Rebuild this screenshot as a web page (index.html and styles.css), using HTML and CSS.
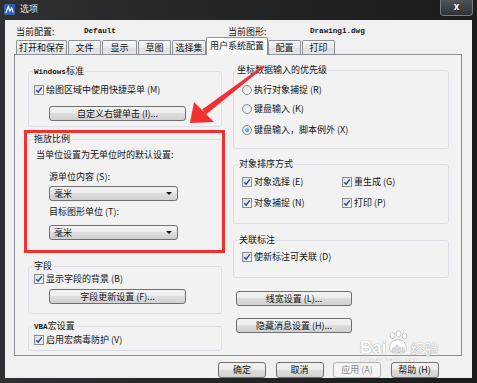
FILE: index.html
```html
<!DOCTYPE html>
<html lang="zh-CN">
<head>
<meta charset="utf-8">
<title>选项</title>
<link rel="stylesheet" href="styles.css">
</head>
<body>
<div class="titlebar">
  <svg class="appicon" viewBox="0 0 11 11"><rect width="11" height="11" rx="1" fill="#2f62b6"/><path d="M1.8 9 L4.3 2.5 L5.8 7 L7.6 4 L9.4 8.6" stroke="#fff" stroke-width="1.2" fill="none"/></svg>
  <span class="title">选项</span>
  <div class="close">x</div>
</div>
<div class="client">
  <div class="hdr">
    <span>当前配置:</span><span class="mono">Default</span>
    <span>当前图形:</span><span class="mono">Drawing1.dwg</span>
  </div>
  <div class="tabs">
    <div class="tab w51">打开和保存</div>
    <div class="tab w33">文件</div>
    <div class="tab w35">显示</div>
    <div class="tab w33">草图</div>
    <div class="tab w34">选择集</div>
    <div class="tab active">用户系统配置</div>
    <div class="tab w33">配置</div>
    <div class="tab w33">打印</div>
  </div>
  <div class="panel">
    <div class="col left">
      <fieldset class="grp g-win">
        <legend><span class="mono">Windows</span>标准</legend>
        <div class="row r-win"><span class="cb"><svg viewBox="0 0 8 8"><path d="M1.2 4.2 L3.2 6.2 L6.8 1.4" stroke="#2b46a3" stroke-width="1.5" fill="none"/></svg></span><span>绘图区域中使用快捷菜单 (M)</span></div>
        <div class="btn b-wide b-win">自定义右键单击 (I)...</div>
      </fieldset>
      <fieldset class="grp g-drag">
        <legend>拖放比例</legend>
        <div class="note">当单位设置为无单位时的默认设置:</div>
        <div class="lbl l1">源单位内容 (S):</div>
        <div class="sel s1"><span>毫米</span><i class="tri"></i></div>
        <div class="lbl l2">目标图形单位 (T):</div>
        <div class="sel s2"><span>毫米</span><i class="tri"></i></div>
      </fieldset>
      <fieldset class="grp g-field">
        <legend>字段</legend>
        <div class="row r-field"><span class="cb"><svg viewBox="0 0 8 8"><path d="M1.2 4.2 L3.2 6.2 L6.8 1.4" stroke="#2b46a3" stroke-width="1.5" fill="none"/></svg></span><span>显示字段的背景 (B)</span></div>
        <div class="btn b-wide b-field">字段更新设置 (F)...</div>
      </fieldset>
      <fieldset class="grp g-vba">
        <legend><span class="mono">VBA</span>宏设置</legend>
        <div class="row r-vba"><span class="cb"><svg viewBox="0 0 8 8"><path d="M1.2 4.2 L3.2 6.2 L6.8 1.4" stroke="#2b46a3" stroke-width="1.5" fill="none"/></svg></span><span>启用宏病毒防护 (V)</span></div>
      </fieldset>
    </div>
    <div class="col right">
      <fieldset class="grp g-coord">
        <legend>坐标数据输入的优先级</legend>
        <div class="row r-c1"><span class="rb"></span><span>执行对象捕捉 (R)</span></div>
        <div class="row r-c2"><span class="rb"></span><span>键盘输入 (K)</span></div>
        <div class="row r-c3"><span class="rb on"></span><span>键盘输入，脚本例外 (X)</span></div>
      </fieldset>
      <fieldset class="grp g-sort">
        <legend>对象排序方式</legend>
        <div class="grid2 s-r1">
          <div class="row"><span class="cb"><svg viewBox="0 0 8 8"><path d="M1.2 4.2 L3.2 6.2 L6.8 1.4" stroke="#2b46a3" stroke-width="1.5" fill="none"/></svg></span><span>对象选择 (E)</span></div>
          <div class="row"><span class="cb"><svg viewBox="0 0 8 8"><path d="M1.2 4.2 L3.2 6.2 L6.8 1.4" stroke="#2b46a3" stroke-width="1.5" fill="none"/></svg></span><span>重生成 (G)</span></div>
        </div>
        <div class="grid2 s-r2">
          <div class="row"><span class="cb"><svg viewBox="0 0 8 8"><path d="M1.2 4.2 L3.2 6.2 L6.8 1.4" stroke="#2b46a3" stroke-width="1.5" fill="none"/></svg></span><span>对象捕捉 (N)</span></div>
          <div class="row"><span class="cb"><svg viewBox="0 0 8 8"><path d="M1.2 4.2 L3.2 6.2 L6.8 1.4" stroke="#2b46a3" stroke-width="1.5" fill="none"/></svg></span><span>打印 (P)</span></div>
        </div>
      </fieldset>
      <fieldset class="grp g-assoc">
        <legend>关联标注</legend>
        <div class="row r-assoc"><span class="cb"><svg viewBox="0 0 8 8"><path d="M1.2 4.2 L3.2 6.2 L6.8 1.4" stroke="#2b46a3" stroke-width="1.5" fill="none"/></svg></span><span>使新标注可关联 (D)</span></div>
      </fieldset>
      <div class="btn b-right b-lw">线宽设置 (L)...</div>
      <div class="btn b-right b-hide">隐藏消息设置 (H)...</div>
    </div>
  </div>
  <div class="footer">
    <div class="btn fbtn">确定</div>
    <div class="btn fbtn">取消</div>
    <div class="btn fbtn disabled">应用 (A)</div>
    <div class="btn fbtn">帮助 (H)</div>
  </div>
</div>

<div class="redbox"></div>
<svg class="arrow" viewBox="0 0 477 383" width="477" height="383">
  <polygon points="263.4,65.2 264.8,66.8 206,114.6 202.2,109.6" fill="#f2302f"/>
  <polygon points="190,123 194,102 214,122" fill="#f2302f"/>
</svg>
<div class="watermark">
  <div class="wm-main">
    <span class="wm-bai">Bai</span>
    <span class="wm-paw">
      <svg viewBox="0 0 26 26" width="24" height="24">
        <g fill="#fff" stroke="#b5b5b5" stroke-width="0.8">
          <ellipse cx="7" cy="6" rx="2.6" ry="3.2"/>
          <ellipse cx="13.5" cy="4" rx="2.6" ry="3.2"/>
          <ellipse cx="20" cy="6.5" rx="2.6" ry="3.2"/>
          <path d="M4 20 C4 13 9 10.5 13 10.5 C17 10.5 22 13 22 20 C22 24 18 24.5 13 24.5 C8 24.5 4 24 4 20 Z"/>
        </g>
      </svg>
      <span class="wm-du">du</span>
    </span>
    <span class="wm-jy">经验</span>
  </div>
  <div class="wm-url">jingyan.baidu.com</div>
</div>
</body>
</html>
```

FILE: styles.css
```css
* { box-sizing: border-box; }

body {
  margin: 0;
  width: 477px;
  height: 383px;
  overflow: hidden;
  position: relative;
  background: linear-gradient(to right, #2e3033, #232425 50%, #1c1c1c);
  font-family: "Noto Sans CJK SC", "Noto Sans", sans-serif;
  font-size: 9px;
  line-height: 12px;
  color: #141414;
}

.mono {
  font-family: "Liberation Mono", "Noto Sans CJK SC", monospace;
  font-size: 7.6px;
  font-weight: bold;
  letter-spacing: 0;
}

/* title bar */
.titlebar {
  height: 20px;
  display: flex;
  align-items: flex-start;
}
.appicon { width: 11px; height: 11px; margin: 4px 0 0 4px; }
.title { margin: 3px 0 0 5px; color: #e6e6e6; font-size: 9px; line-height: 12px; }
.close {
  margin-left: auto;
  margin-right: 4px;
  width: 33px;
  height: 16px;
  border: 1px solid #77797c;
  border-top: none;
  border-radius: 0 0 4px 4px;
  background: linear-gradient(#505357, #2e3032);
  color: #fff;
  font: bold 10px/14px "Liberation Sans", sans-serif;
  text-align: center;
}

/* client area */
.client {
  margin-left: 5px;
  width: 467px;
  height: 358px;
  background: #f0f0f0;
  padding: 6px 0 0 9px;
}

.hdr {
  height: 11px;
  display: grid;
  grid-template-columns: 68px 144px 82px auto;
  padding-left: 2px;
  line-height: 11px;
  align-items: center;
}

.tabs {
  height: 17px;
  display: flex;
  align-items: flex-end;
  padding-left: 2px;
  position: relative;
  z-index: 1;
}
.tab {
  height: 14px;
  margin-right: 1px;
  border: 1px solid #8d9096;
  border-bottom: none;
  border-radius: 2px 2px 0 0;
  background: linear-gradient(#f7f7f7, #ebebeb 50%, #dedede 51%, #e6e6e6);
  display: flex;
  align-items: center;
  justify-content: center;
  line-height: 12px;
}
.w51 { width: 51px; }
.w33 { width: 33px; }
.w34 { width: 34px; }
.w35 { width: 35px; }
.tab.active {
  width: 62px;
  height: 18px;
  margin-left: -1px;
  margin-right: 0;
  margin-bottom: -1px;
  background: linear-gradient(#ffffff, #f6f6f6);
  padding-bottom: 2px;
}

.panel {
  width: 448px;
  height: 302px;
  border: 1px solid #8d9096;
  background: #f2f2f2;
  display: flex;
  gap: 11px;
  padding: 10px 0 0 13px;
}
.col { display: flex; flex-direction: column; }
.col.left { width: 194px; }
.col.right { width: 216px; margin-top: -1px; }

/* group boxes */
.grp {
  margin: 0;
  padding: 0;
  border: 1px solid #d9dfe4;
  border-radius: 3px;
  min-width: 0;
}
.grp legend {
  padding: 0 1px;
  margin-left: 4px;
  height: 12px;
  line-height: 12px;
}
.g-win { height: 62px; }
.g-drag { height: 118px; margin-top: 6px; }
.g-field { height: 54px; margin-top: 9px; }
.g-vba { height: 31px; margin-top: 6px; }
.g-coord { height: 85px; }
.g-coord legend { margin-left: 3px; padding: 0; }
.g-sort { height: 66px; margin-top: 9px; }
.g-assoc { height: 44px; margin-top: 10px; }

.row {
  display: flex;
  align-items: center;
  height: 12px;
  padding-left: 5px;
  white-space: nowrap;
}
.r-win { margin-top: 7px; }
.r-field { margin-top: 1px; }
.r-vba { margin-top: 2px; }
.r-c1, .r-c2, .r-c3, .r-assoc { padding-left: 8px; }
.r-c1 { margin-top: 8px; }
.r-c2 { margin-top: 7px; }
.r-c3 { margin-top: 9px; }
.r-assoc { margin-top: 5px; }

.grid2 {
  display: grid;
  grid-template-columns: 100px 100px;
  padding-left: 3px;
}
.s-r1 { margin-top: 6px; }
.s-r2 { margin-top: 9px; }

.cb {
  width: 10px;
  height: 10px;
  flex: none;
  margin-right: 2px;
  border: 1px solid #8e8f8f;
  background: linear-gradient(135deg, #d7d9dc, #fbfbfb);
  display: flex;
}
.cb svg { width: 8px; height: 8px; }

.rb {
  width: 10px;
  height: 10px;
  flex: none;
  margin-right: 2px;
  border: 1px solid #8e8f8f;
  border-radius: 50%;
  background: radial-gradient(circle at 60% 65%, #fafafa, #d4d6d9);
  display: flex;
  align-items: center;
  justify-content: center;
}
.rb.on::after {
  content: "";
  width: 4px;
  height: 4px;
  border-radius: 50%;
  background: radial-gradient(circle at 40% 35%, #8fd0f5, #1f5fb0);
}

/* buttons */
.btn {
  height: 15px;
  border: 1px solid #707070;
  border-radius: 3px;
  background: linear-gradient(#f3f3f3, #ececec 45%, #dedede 50%, #d0d0d0);
  display: flex;
  align-items: center;
  justify-content: center;
  line-height: 12px;
  white-space: nowrap;
  flex: none;
}
.btn.disabled {
  border-color: #adb2b5;
  background: #f4f4f4;
  color: #8a8a8a;
}
.b-wide { width: 137px; margin-left: 20px; }
.b-win { margin-top: 10px; }
.b-field { margin-top: 4px; }
.b-right { width: 116px; margin-left: 3px; }
.b-lw { margin-top: 13px; }
.b-hide { margin-top: 12px; }

/* drag-scale group content */
.note { margin-top: 4px; padding-left: 7px; white-space: nowrap; }
.lbl { padding-left: 20px; white-space: nowrap; }
.l1 { margin-top: 10px; }
.l2 { margin-top: 5px; }
.sel {
  width: 129px;
  height: 15px;
  margin-left: 20px;
  border: 1px solid #707070;
  border-radius: 3px;
  background: linear-gradient(#f3f3f3, #ececec 45%, #dedede 50%, #d0d0d0);
  display: flex;
  align-items: center;
  justify-content: space-between;
  padding: 0 5px 0 4px;
  line-height: 12px;
}
.s1 { margin-top: 3px; }
.s2 { margin-top: 7px; }
.tri {
  width: 0;
  height: 0;
  border-left: 3px solid transparent;
  border-right: 3px solid transparent;
  border-top: 3px solid #111;
}

/* footer */
.footer {
  display: flex;
  gap: 9.5px;
  margin-top: 6px;
  padding-left: 204px;
}
.fbtn { width: 48px; height: 16px; }

/* annotations */
.redbox {
  position: absolute;
  left: 24px;
  top: 130px;
  width: 201px;
  height: 123px;
  border: 3px solid #f2302f;
}
.arrow {
  position: absolute;
  left: 0;
  top: 0;
  pointer-events: none;
}

.watermark {
  position: absolute;
  left: 360px;
  top: 330px;
  width: 95px;
  display: flex;
  flex-direction: column;
  pointer-events: none;
}
.wm-main {
  height: 26px;
  display: flex;
  align-items: flex-end;
}
.wm-bai, .wm-du {
  font-family: "Liberation Sans", sans-serif;
  font-weight: bold;
  color: #fff;
  text-shadow: 0 0 1px #9e9e9e, 0 0 1px #9e9e9e;
}
.wm-bai { font-size: 17px; line-height: 17px; }
.wm-paw {
  position: relative;
  width: 24px;
  height: 26px;
  display: flex;
  align-items: flex-end;
  justify-content: center;
}
.wm-paw svg { position: absolute; left: 0; top: 0; }
.wm-du { position: relative; font-size: 10px; line-height: 12px; color: #e8e8e8; }
.wm-jy {
  font-size: 14px;
  line-height: 16px;
  color: #fff;
  text-shadow: 0 0 1px #9e9e9e, 0 0 1px #9e9e9e;
}
.wm-url {
  font-family: "Liberation Sans", sans-serif;
  font-size: 5.5px;
  line-height: 6px;
  color: rgba(190, 190, 190, 0.55);
  letter-spacing: 0.8px;
}
```
